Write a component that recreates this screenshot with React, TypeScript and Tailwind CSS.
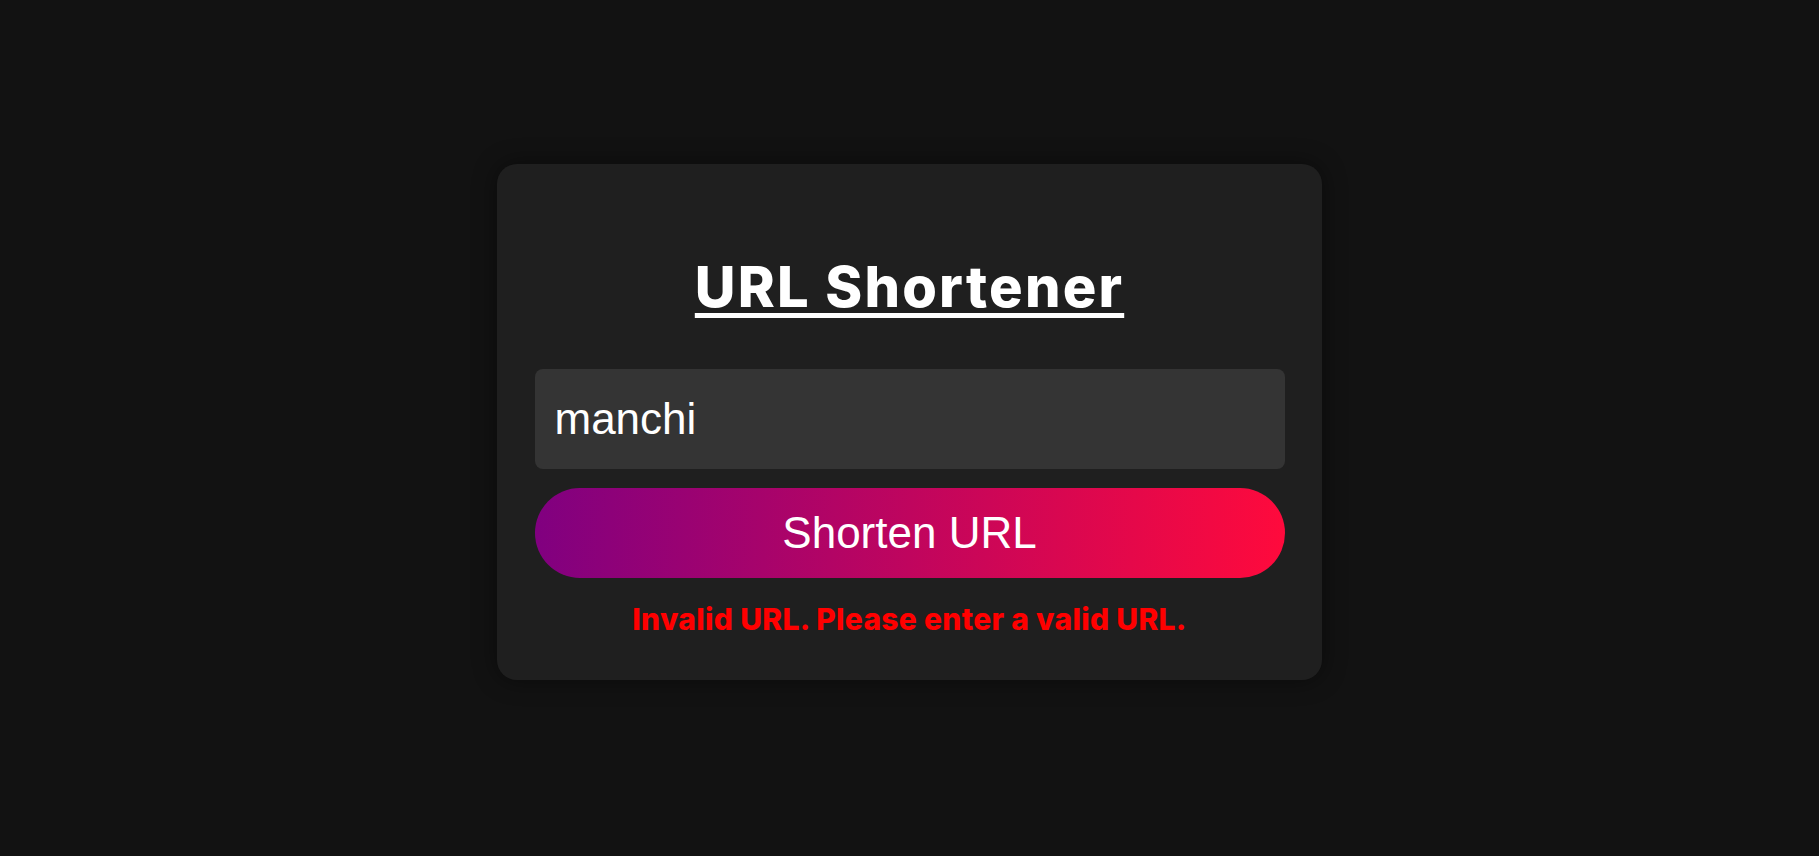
export default function App() {
  return (
    <main className="flex min-h-screen justify-center bg-[#121212] pt-[164px]">
      <div className="flex h-[516px] w-[825px] flex-col items-center rounded-[20px] bg-[#1f1f1f] px-[37.5px] shadow-[0_0_24px_rgba(0,0,0,0.45)]">
        <h1 className="mt-[95px] font-['Inter',sans-serif] text-[56px] leading-none font-extrabold tracking-[2.2px] text-white underline decoration-[5px] underline-offset-[6px]">
          URL Shortener
        </h1>

        <input
          className="mt-[54px] h-[100px] w-full rounded-[8px] bg-[#343434] px-[20px] font-['Liberation_Sans',Arial,sans-serif] text-[44px] text-white outline-none"
          value="manchi"
          readOnly
        />

        <button className="mt-[19px] h-[90px] w-full rounded-full bg-[linear-gradient(93deg,#800080,#ff0a3c)] font-['Liberation_Sans',Arial,sans-serif] text-[44px] text-white">
          Shorten URL
        </button>

        <p className="mt-[26px] font-['Inter',sans-serif] text-[30px] leading-none font-extrabold tracking-[0.3px] text-[#ff0000]">
          Invalid URL. Please enter a valid URL.
        </p>
      </div>
    </main>
  );
}
